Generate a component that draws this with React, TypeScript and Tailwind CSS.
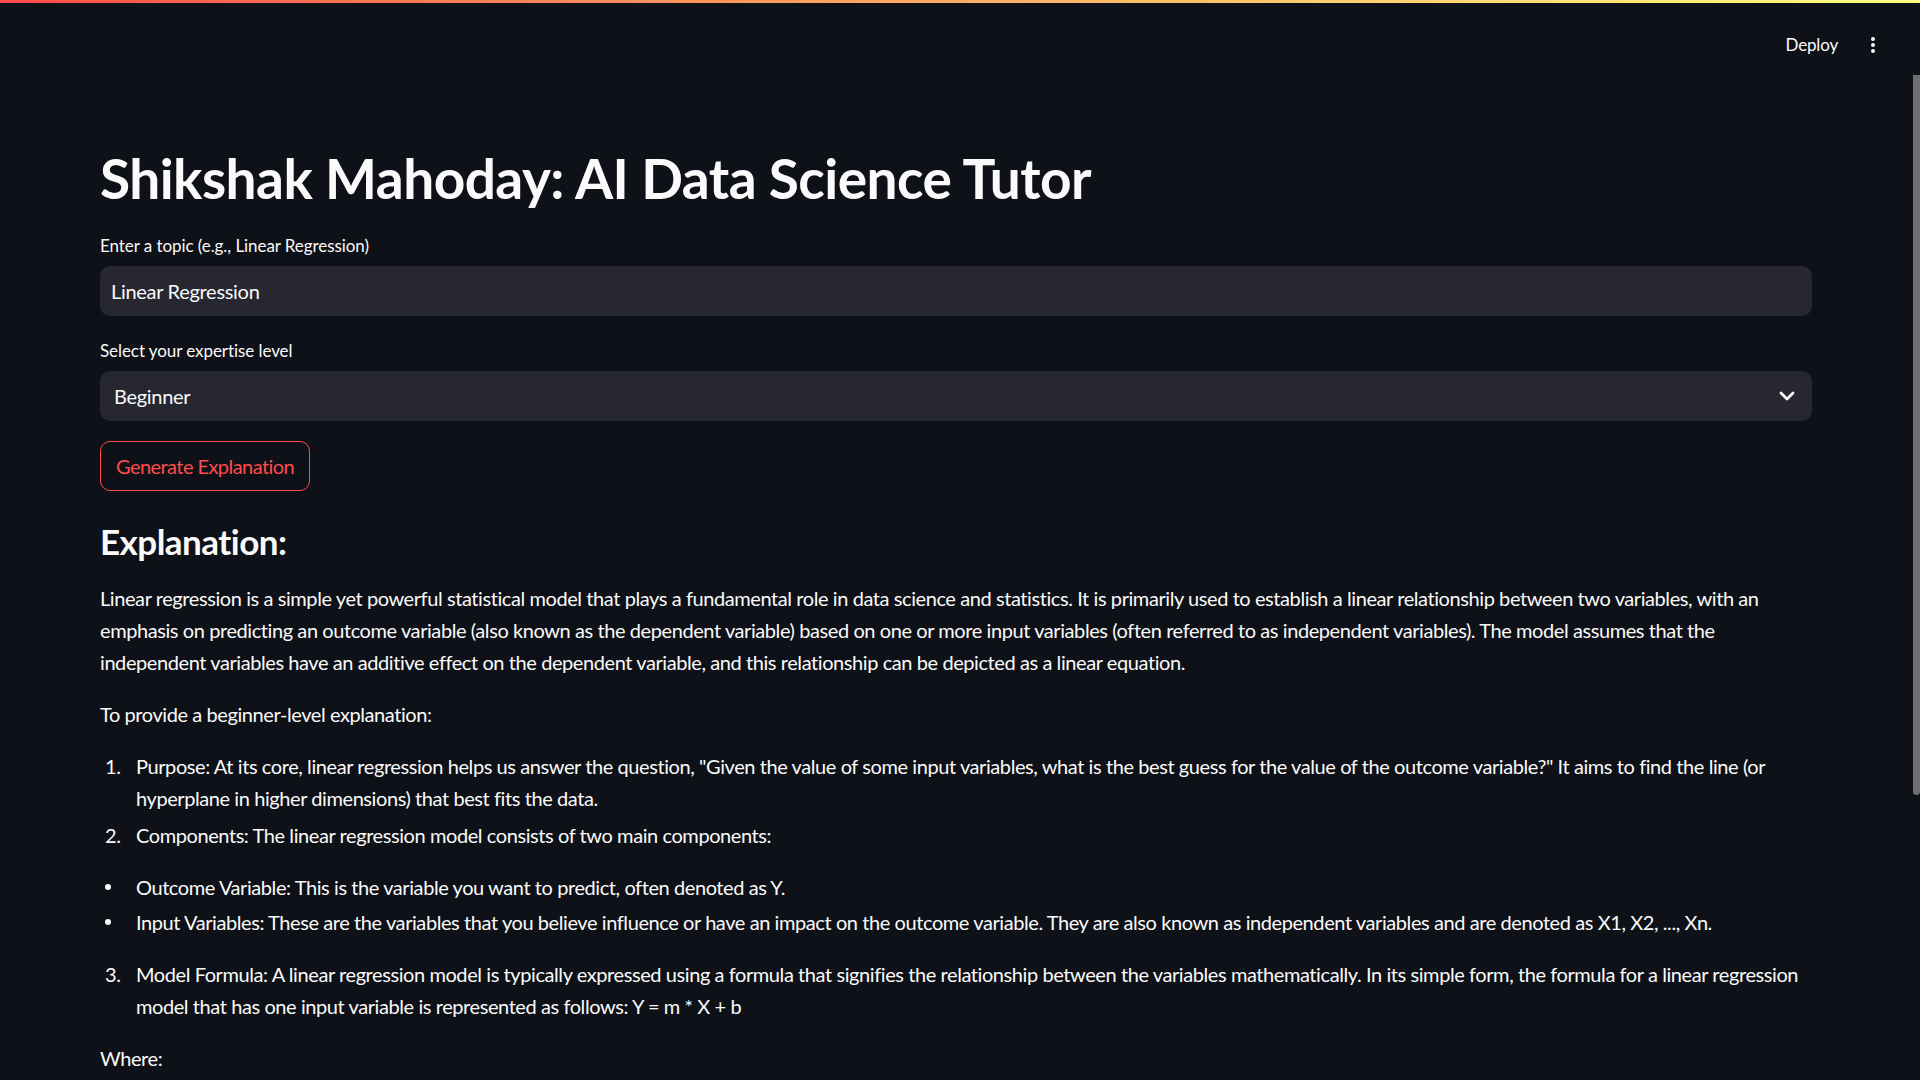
import React from 'react';

const font = { fontFamily: 'Lato, "Noto Sans", sans-serif' };

const MoreIcon = () => (
  <svg width="6" height="18" viewBox="0 0 6 18" fill="#fafafa">
    <circle cx="3" cy="3" r="2" />
    <circle cx="3" cy="9" r="2" />
    <circle cx="3" cy="15" r="2" />
  </svg>
);

const Chevron = () => (
  <svg width="24" height="24" viewBox="0 0 24 24" fill="none" stroke="#fafafa" strokeWidth="2.8" strokeLinecap="round" strokeLinejoin="round">
    <path d="M6 9l6 6 6-6" />
  </svg>
);

const Numbered = ({ n, children, className = '' }: { n: number; children: React.ReactNode; className?: string }) => (
  <li className={`flex ${className}`}>
    <span className="w-[36px] shrink-0 pl-[5px]">{n}.</span>
    <span>{children}</span>
  </li>
);

const Bullet = ({ children, className = '' }: { children: React.ReactNode; className?: string }) => (
  <li className={`flex ${className}`}>
    <span className="flex h-[32px] w-[36px] shrink-0 items-center pl-[5px]">
      <span className="h-[6px] w-[6px] rounded-full bg-[#fafafa]" />
    </span>
    <span>{children}</span>
  </li>
);

export default function App() {
  return (
    <div className="relative min-h-screen bg-[#0e1117] text-[#fafafa] font-['Lato',sans-serif]" style={font}>
      <div className="h-[3px] bg-gradient-to-r from-[#ff4b4b] to-[#ffff80]" />

      <header className="flex h-[84px] items-center justify-end gap-[32px] pr-[44px]">
        <span className="text-[17px] tracking-[-0.01em]">Deploy</span>
        <MoreIcon />
      </header>

      <div className="absolute right-0 top-[75px] h-[720px] w-[7px] rounded-b-sm bg-[#6e6e72]" />

      <main className="pl-[100px] pr-[108px] pt-[58px] pb-10">
        <h1 className="text-[55px] font-bold leading-[66px] tracking-[-0.01em]">
          Shikshak Mahoday: AI Data Science Tutor
        </h1>

        <div className="mt-[21px] flex flex-col">
          <label className="text-[17px] leading-[28px] tracking-[-0.004em]">Enter a topic (e.g., Linear Regression)</label>
          <div className="mt-[6px] flex h-[50px] items-center rounded-[10px] bg-[#262730] pl-[11px] text-[20px] tracking-[-0.015em]">
            Linear Regression
          </div>
        </div>

        <div className="mt-[21px] flex flex-col">
          <label className="text-[17px] leading-[28px] tracking-[-0.004em]">Select your expertise level</label>
          <div className="mt-[6px] flex h-[50px] items-center justify-between rounded-[10px] bg-[#262730] pl-[14px] pr-[13px] text-[20px] tracking-[-0.015em]">
            <span>Beginner</span>
            <Chevron />
          </div>
        </div>

        <button className="mt-[20px] flex h-[50px] items-center rounded-[10px] border border-[#ff4b4b] px-[15px] text-[20px] tracking-[-0.028em] text-[#ff4b4b]">
          Generate Explanation
        </button>

        <h3 className="mt-[29px] text-[35px] font-bold leading-[42px] tracking-[-0.015em]">Explanation:</h3>

        <div className="mt-[20px] text-[20px] leading-[32px] tracking-[-0.021em]">
          <p>
            Linear regression is a simple yet powerful statistical model that plays a fundamental role in data science and statistics. It is primarily used to establish a linear relationship between two variables, with an emphasis on predicting an outcome variable (also known as the dependent variable) based on one or more input variables (often referred to as independent variables). The model assumes that the independent variables have an additive effect on the dependent variable, and this relationship can be depicted as a linear equation.
          </p>
          <p className="mt-[20px]">To provide a beginner-level explanation:</p>

          <ol className="mt-[20px]">
            <Numbered n={1}>
              Purpose: At its core, linear regression helps us answer the question, "Given the value of some input variables, what is the best guess for the value of the outcome variable?" It aims to find the line (or hyperplane in higher dimensions) that best fits the data.
            </Numbered>
            <Numbered n={2} className="mt-[5px]">Components: The linear regression model consists of two main components:</Numbered>
          </ol>

          <ul className="mt-[20px]">
            <Bullet>Outcome Variable: This is the variable you want to predict, often denoted as Y.</Bullet>
            <Bullet className="mt-[3px]">
              Input Variables: These are the variables that you believe influence or have an impact on the outcome variable. They are also known as independent variables and are denoted as X1, X2, ..., Xn.
            </Bullet>
          </ul>

          <ol start={3} className="mt-[20px]">
            <Numbered n={3}>
              Model Formula: A linear regression model is typically expressed using a formula that signifies the relationship between the variables mathematically. In its simple form, the formula for a linear regression model that has one input variable is represented as follows: Y = m * X + b
            </Numbered>
          </ol>

          <p className="mt-[20px]">Where:</p>
        </div>
      </main>
    </div>
  );
}
